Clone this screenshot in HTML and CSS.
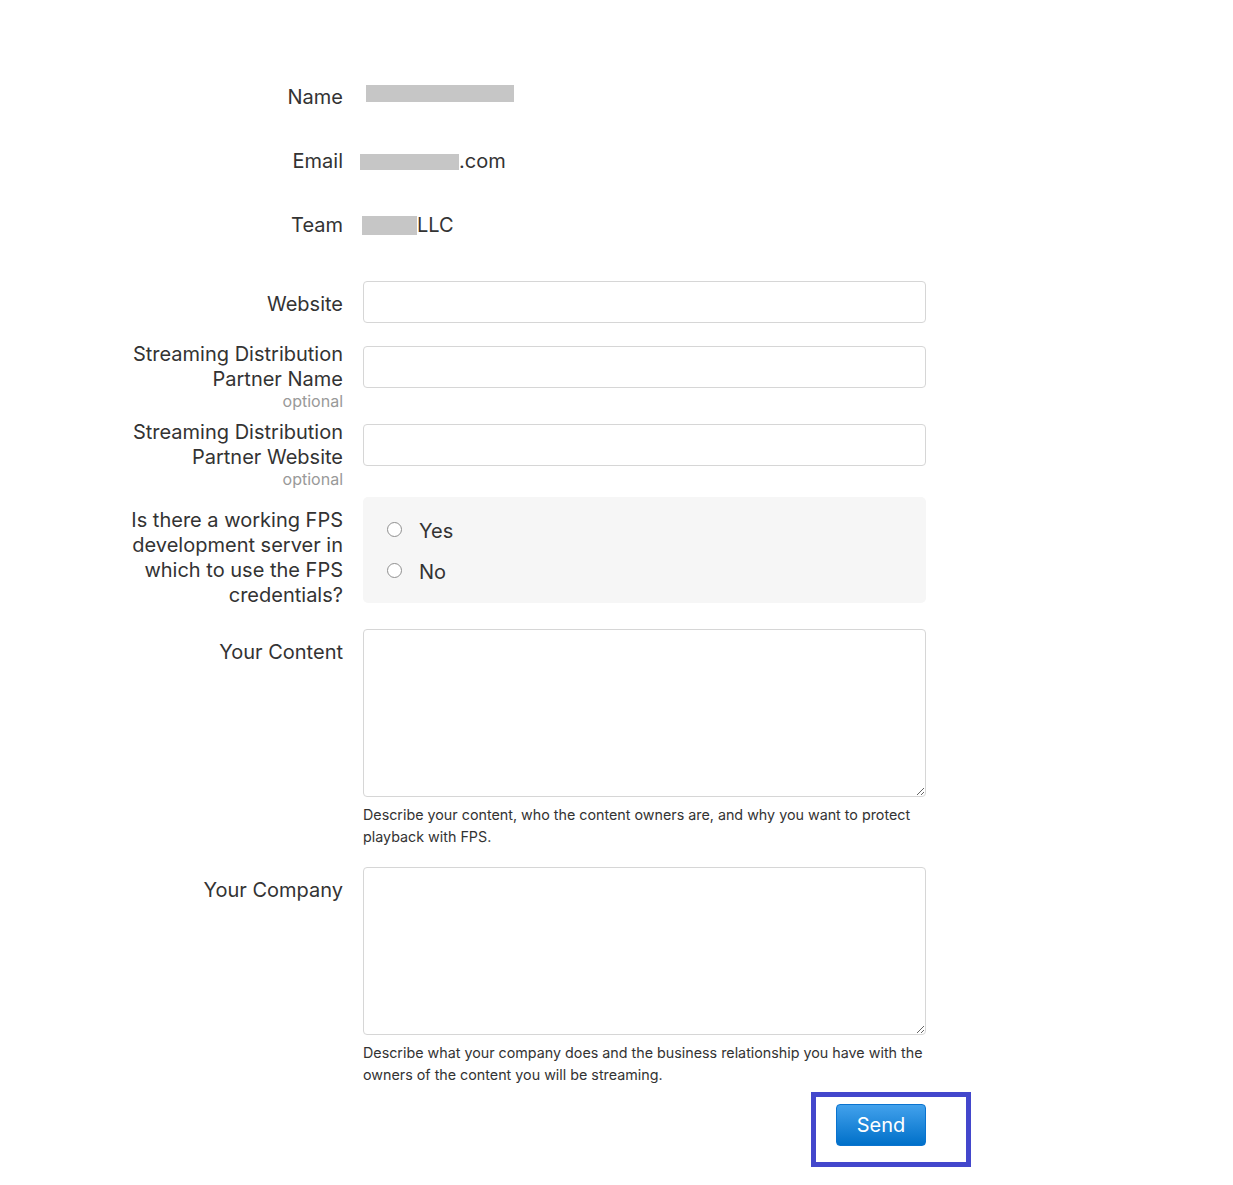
FILE: index.html
```html
<!DOCTYPE html>
<html lang="en">
<head>
    <meta charset="UTF-8">
    <meta name="viewport" content="width=device-width, initial-scale=1.0">
    <title>FPS Request</title>
    <link rel="stylesheet" href="styles.css">
</head>
<body>
    <form class="fps-form">
        <div class="row info-row">
            <div class="label">Name</div>
            <div class="value"><span class="redact redact-name"></span></div>
        </div>
        <div class="row info-row">
            <div class="label">Email</div>
            <div class="value"><span class="redact redact-email"></span>.com</div>
        </div>
        <div class="row info-row">
            <div class="label">Team</div>
            <div class="value"><span class="redact redact-team"></span>LLC</div>
        </div>

        <div class="row field-row first-field">
            <label class="label label-pad" for="website">Website</label>
            <div class="field"><input type="text" id="website"></div>
        </div>
        <div class="row field-row tall-label">
            <label class="label" for="partner-name">Streaming Distribution Partner Name<span class="optional">optional</span></label>
            <div class="field"><input type="text" id="partner-name"></div>
        </div>
        <div class="row field-row tall-label">
            <label class="label" for="partner-site">Streaming Distribution Partner Website<span class="optional">optional</span></label>
            <div class="field"><input type="text" id="partner-site"></div>
        </div>
        <div class="row field-row radio-row">
            <div class="label label-pad">Is there a working FPS development server in which to use the FPS credentials?</div>
            <div class="field">
                <div class="radio-box">
                    <label class="radio"><input type="radio" name="dev-server"> Yes</label>
                    <label class="radio"><input type="radio" name="dev-server"> No</label>
                </div>
            </div>
        </div>
        <div class="row field-row content-row">
            <label class="label label-pad" for="content">Your Content</label>
            <div class="field">
                <textarea id="content"></textarea>
                <p class="help">Describe your content, who the content owners are, and why you want to protect playback with FPS.</p>
            </div>
        </div>
        <div class="row field-row company-row">
            <label class="label label-pad" for="company">Your Company</label>
            <div class="field">
                <textarea id="company"></textarea>
                <p class="help">Describe what your company does and the business relationship you have with the owners of the content you will be streaming.</p>
            </div>
        </div>
        <div class="row actions">
            <div></div>
            <div class="field send-wrap">
                <span class="highlight"><button type="button" class="send-btn">Send</button></span>
            </div>
        </div>
    </form>
</body>
</html>
```

FILE: styles.css
```css
body {
    margin: 0;
    padding: 0 0 60px;
    background: #fff;
    color: #333;
    font-family: Inter, "Liberation Sans", Arial, sans-serif;
}
.fps-form {
    padding-top: 85px;
}
.row {
    display: grid;
    grid-template-columns: 343px 563px;
    column-gap: 20px;
    align-items: start;
}
.label {
    display: block;
    box-sizing: border-box;
    padding-left: 127px;
    text-align: right;
    font-size: 20px;
    line-height: 25px;
    color: #333;
}
.label-pad {
    padding-top: 11px;
}
.optional {
    display: block;
    font-size: 16px;
    line-height: 20px;
    color: #999;
    margin-top: -1px;
}
.info-row {
    margin-bottom: 39px;
}
.value {
    font-size: 20px;
    line-height: 25px;
    color: #333;
    display: flex;
    align-items: center;
}
.redact {
    display: inline-block;
    background: #c6c6c6;
}
.redact-name {
    width: 148px;
    height: 17px;
    margin-left: 3px;
}
.redact-email {
    width: 99px;
    height: 16px;
    margin-left: -3px;
    margin-top: 1px;
}
.redact-team {
    width: 55px;
    height: 19px;
    margin-left: -1px;
}
.first-field {
    margin-top: 43px;
    margin-bottom: 17px;
}
.tall-label {
    margin-bottom: 7px;
}
.tall-label .label {
    padding-top: 2px;
}
.tall-label .field {
    padding-top: 6px;
}
.field input[type="text"] {
    width: 100%;
    height: 42px;
    box-sizing: border-box;
    border: 1px solid #d6d6d6;
    border-radius: 4px;
    padding: 0 12px;
    font-size: 17px;
}
.radio-row {
    margin-top: 8px;
    margin-bottom: 21px;
}
.radio-box {
    background: #f6f6f6;
    border-radius: 5px;
    height: 106px;
    box-sizing: border-box;
    padding: 22px 24px 0;
}
.radio {
    display: flex;
    align-items: center;
    font-size: 20px;
    line-height: 25px;
    height: 25px;
    margin-bottom: 16px;
}
.radio input {
    appearance: none;
    -webkit-appearance: none;
    width: 15px;
    height: 15px;
    margin: 0 17px 0 0;
    border: 1px solid #8f8f8f;
    border-radius: 50%;
    background: #fff;
    position: relative;
    top: -2px;
}
.field textarea {
    display: block;
    width: 100%;
    height: 168px;
    box-sizing: border-box;
    border: 1px solid #d6d6d6;
    border-radius: 4px;
    padding: 8px 12px;
    font-size: 17px;
}
.help {
    margin: 7px 0 0;
    font-size: 14.3px;
    line-height: 22px;
    color: #333;
}
.content-row {
    margin-bottom: 19px;
}
.actions {
    margin-top: 18px;
}
.send-wrap {
    display: flex;
    justify-content: flex-end;
}
.highlight {
    position: relative;
    display: inline-block;
}
.highlight::after {
    content: "";
    position: absolute;
    left: -25px;
    top: -12px;
    right: -45px;
    bottom: -21px;
    border: 5px solid #4347cc;
    pointer-events: none;
}
.send-btn {
    display: block;
    width: 90px;
    height: 42px;
    border: 1px solid #0a73cf;
    border-radius: 4px;
    background: linear-gradient(#42a1ec, #0070c9);
    color: #fff;
    font-family: inherit;
    font-size: 20px;
    cursor: pointer;
}
```
